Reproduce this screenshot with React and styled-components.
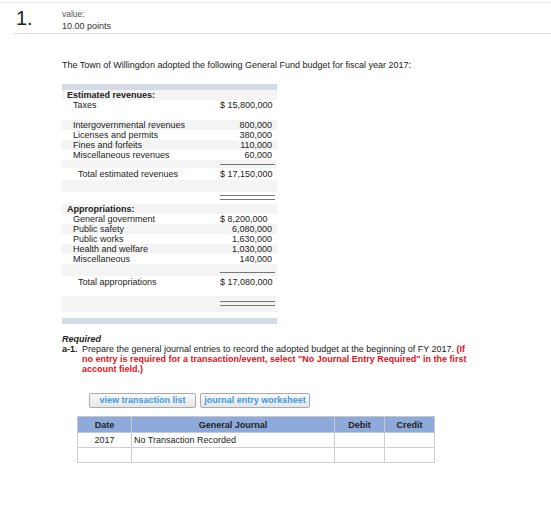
import React from "react";
import styled, { createGlobalStyle } from "styled-components";

const GlobalStyle = createGlobalStyle`
  body {
    margin: 0;
    background: #fff;
    font-family: "Liberation Sans", Arial, sans-serif;
    color: #222;
  }
`;

const revenues = [
  { label: "Estimated revenues:", kind: "head", shade: true },
  { label: "Taxes", amount: "$ 15,800,000", dollar: true },
  { kind: "blank" },
  { label: "Intergovernmental revenues", amount: "800,000", shade: true },
  { label: "Licenses and permits", amount: "380,000" },
  { label: "Fines and forfeits", amount: "110,000", shade: true },
  { label: "Miscellaneous revenues", amount: "60,000" },
  { kind: "rule", shade: true, h: 8 },
  { label: "Total estimated revenues", amount: "$ 17,150,000", dollar: true, kind: "total", h: 12 },
  { kind: "blank", shade: true, h: 12 },
  { kind: "double", h: 12 },
];

const appropriations = [
  { label: "Appropriations:", kind: "head", shade: true },
  { label: "General government", amount: "$ 8,200,000", dollar: true },
  { label: "Public safety", amount: "6,080,000", shade: true },
  { label: "Public works", amount: "1,630,000" },
  { label: "Health and welfare", amount: "1,030,000", shade: true },
  { label: "Miscellaneous", amount: "140,000" },
  { kind: "rule", shade: true, h: 12, lineAt: "bottom" },
  { label: "Total appropriations", amount: "$ 17,080,000", dollar: true, kind: "total", h: 12 },
  { kind: "blank", h: 8 },
  { kind: "double", shade: true, h: 16 },
  { kind: "blank", h: 6 },
];

const BudgetRow = ({ row }) => (
  <Row $shade={row.shade} $h={row.h || 10}>
    <Label $kind={row.kind}>{row.label}</Label>
    <Amount $dollar={row.dollar}>
      {row.kind === "rule" && <SingleRule $at={row.lineAt} />}
      {row.kind === "double" && <DoubleRule />}
      {row.amount}
    </Amount>
  </Row>
);

const App = () => {
  return (
    <Page>
      <GlobalStyle />
      <Header>
        <Number>1.</Number>
        <Points>
          <PointsLabel>value:</PointsLabel>
          <PointsValue>10.00 points</PointsValue>
        </Points>
      </Header>
      <Content>
        <Intro>
          The Town of Willingdon adopted the following General Fund budget for
          fiscal year 2017:
        </Intro>
        <Budget>
          <Bar />
          {revenues.map((row, i) => (
            <BudgetRow key={"r" + i} row={row} />
          ))}
          {appropriations.map((row, i) => (
            <BudgetRow key={"a" + i} row={row} />
          ))}
          <Bar />
        </Budget>
        <Required>Required</Required>
        <Task>
          <TaskNo>a-1.</TaskNo>
          <TaskText>
            Prepare the general journal entries to record the adopted budget at
            the beginning of FY 2017. <Warn>(If</Warn>
            <br />
            <Warn>
              no entry is required for a transaction/event, select "No Journal
              Entry Required" in the first
            </Warn>
            <br />
            <Warn>account field.)</Warn>
          </TaskText>
        </Task>
        <Buttons>
          <Button $w={107}>view transaction list</Button>
          <Button $w={110}>journal entry worksheet</Button>
        </Buttons>
        <Journal>
          <colgroup>
            <col style={{ width: 54 }} />
            <col style={{ width: 203 }} />
            <col style={{ width: 50 }} />
            <col style={{ width: 50 }} />
          </colgroup>
          <thead>
            <tr>
              <Th>Date</Th>
              <Th>General Journal</Th>
              <Th>Debit</Th>
              <Th>Credit</Th>
            </tr>
          </thead>
          <tbody>
            <tr>
              <Td $center>2017</Td>
              <Td>No Transaction Recorded</Td>
              <Td />
              <Td />
            </tr>
            <tr>
              <Td />
              <Td />
              <Td />
              <Td />
            </tr>
          </tbody>
        </Journal>
      </Content>
    </Page>
  );
};

const Page = styled.div`
  width: 551px;
  min-height: 521px;
  padding-top: 2px;
  box-sizing: border-box;
  &::before {
    content: "";
    display: block;
    height: 1px;
    background: #ececec;
  }
`;

const Header = styled.div`
  display: flex;
  margin-left: 13px;
  height: 30px;
  border-bottom: 1px solid #e2e2e2;
`;

const Number = styled.div`
  width: 49px;
  padding-left: 3px;
  box-sizing: border-box;
  font-size: 20px;
  line-height: 20px;
  padding-top: 5px;
  color: #222;
`;

const Points = styled.div`
  display: flex;
  flex-direction: column;
  padding-top: 6px;
  color: #555;
`;

const PointsLabel = styled.div`
  font-size: 8.5px;
  line-height: 11px;
`;

const PointsValue = styled.div`
  font-size: 9px;
  line-height: 12px;
  color: #333;
`;

const Content = styled.div`
  padding-left: 62px;
`;

const Intro = styled.div`
  margin-top: 26px;
  font-size: 9px;
  line-height: 11px;
  color: #222;
`;

const Budget = styled.div`
  width: 215px;
  margin-top: 13px;
  display: flex;
  flex-direction: column;
`;

const Bar = styled.div`
  height: 6px;
  background: #d4dae6;
`;

const Row = styled.div`
  display: flex;
  height: ${(p) => p.$h}px;
  align-items: center;
  background: ${(p) => (p.$shade ? "#f4f4f4" : "#fff")};
  font-size: 9px;
  line-height: 10px;
  color: #222;
`;

const Label = styled.div`
  flex: 1;
  padding-left: ${(p) =>
    p.$kind === "head" ? "5px" : p.$kind === "total" ? "16px" : "11px"};
  font-weight: ${(p) => (p.$kind === "head" ? "bold" : "normal")};
  white-space: nowrap;
`;

const Amount = styled.div`
  position: relative;
  width: 57px;
  height: 100%;
  display: flex;
  align-items: center;
  justify-content: ${(p) => (p.$dollar ? "flex-start" : "flex-end")};
  padding-right: ${(p) => (p.$dollar ? "0" : "5px")};
  white-space: nowrap;
  box-sizing: border-box;
`;

const SingleRule = styled.div`
  position: absolute;
  left: 0;
  right: 2px;
  ${(p) => (p.$at === "bottom" ? "bottom: 3px;" : "top: 4px;")}
  border-top: 1px solid #777;
`;

const DoubleRule = styled.div`
  position: absolute;
  left: 0;
  right: 2px;
  top: 50%;
  margin-top: -3px;
  height: 3px;
  border-top: 1px solid #777;
  border-bottom: 1px solid #777;
`;

const Required = styled.div`
  margin-top: 10px;
  font-size: 9px;
  line-height: 10px;
  font-style: italic;
  font-weight: bold;
  color: #222;
`;

const Task = styled.div`
  display: flex;
  font-size: 9px;
  line-height: 10px;
`;

const TaskNo = styled.div`
  width: 20px;
  flex-shrink: 0;
  font-weight: bold;
`;

const TaskText = styled.div`
  color: #222;
  white-space: nowrap;
`;

const Warn = styled.span`
  color: #e8101a;
  font-weight: bold;
`;

const Buttons = styled.div`
  display: flex;
  gap: 4px;
  margin-top: 19px;
  margin-left: 27px;
`;

const Button = styled.div`
  width: ${(p) => p.$w}px;
  height: 15px;
  box-sizing: border-box;
  border: 1px solid #aaa;
  border-radius: 2px;
  background: linear-gradient(#fafafa, #e6e6e6);
  color: #3a9be6;
  font-size: 9px;
  font-weight: bold;
  line-height: 13px;
  text-align: center;
`;

const Journal = styled.table`
  margin-top: 8px;
  margin-left: 15px;
  width: 357px;
  table-layout: fixed;
  border-collapse: collapse;
  font-size: 9px;
  color: #222;
`;

const Th = styled.th`
  height: 15px;
  padding: 0;
  background: #8eaadb;
  border: 1px solid #c8c8c8;
  font-weight: bold;
  text-align: center;
`;

const Td = styled.td`
  height: 14px;
  padding: 0 2px;
  border: 1px solid #cfcfcf;
  text-align: ${(p) => (p.$center ? "center" : "left")};
`;

export default App;
